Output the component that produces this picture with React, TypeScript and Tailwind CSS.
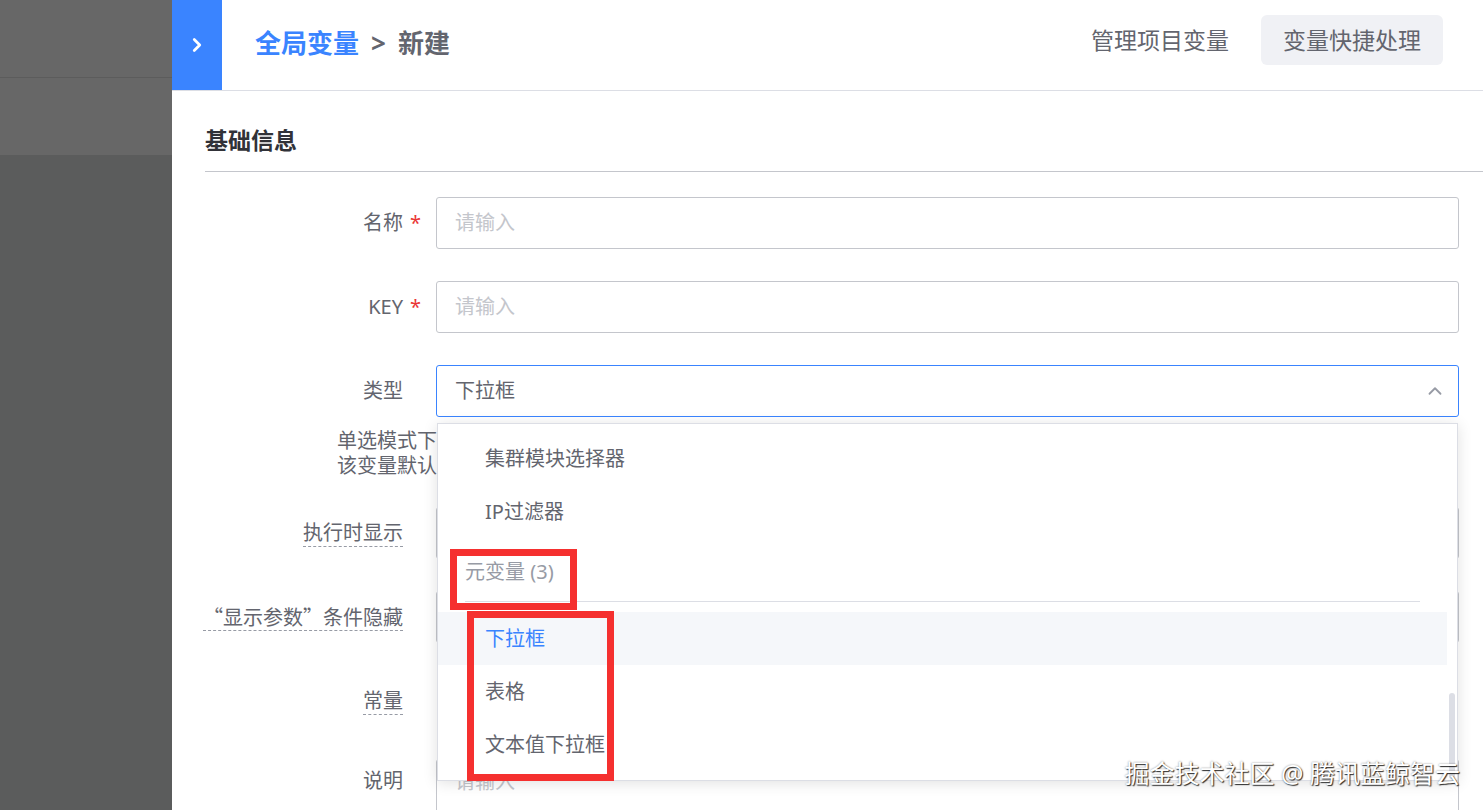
import { ChevronRight, ChevronUp } from "lucide-react";

const font = "font-['Noto_Sans','Noto_Sans_CJK_SC',sans-serif]";

function Label({ text, required, dashed, cjk }: { text: string; required?: boolean; dashed?: boolean; cjk?: boolean }) {
    const base = dashed
        ? "whitespace-nowrap border-b border-dashed border-[#979ba5] text-[20px] leading-[26px] text-[#63656e]"
        : "whitespace-nowrap text-[20px] leading-[26px] text-[#63656e]";
    return (
        <div className="flex w-[231px] shrink-0 items-center">
            <div className="flex w-[198px] justify-end">
                <span className={cjk ? `${base} font-['Noto_Sans_CJK_SC',sans-serif]` : base}>{text}</span>
            </div>
            {required && <span className="ml-[7px] text-[20px] text-[#ea3636]">*</span>}
        </div>
    );
}

function Input({ placeholder }: { placeholder?: string }) {
    return (
        <div className="flex h-[52px] flex-1 items-center rounded-[3px] border border-[#c4c6cc] px-[18px] text-[20px] text-[#c4c6cc]">
            {placeholder}
        </div>
    );
}

function Option({ text, active }: { text: string; active?: boolean }) {
    return (
        <div
            className={
                active
                    ? "flex h-[53px] items-center bg-[#f5f7fa] pl-[47px] text-[20px] text-[#3a84ff]"
                    : "flex h-[53px] items-center pl-[47px] text-[20px] text-[#63656e]"
            }
        >
            {text}
        </div>
    );
}

export default function App() {
    return (
        <div className={`flex h-[810px] w-full overflow-hidden ${font}`}>
            <aside className="flex w-[172px] shrink-0 flex-col">
                <div className="h-[78px] border-b border-[#5c5c5c] bg-[#676767]" />
                <div className="h-[77px] bg-[#676767]" />
                <div className="flex-1 bg-[#5b5c5c]" />
            </aside>

            <main className="relative flex flex-1 flex-col bg-white">
                <header className="flex h-[91px] items-center border-b border-[#dcdee5]">
                    <button className="flex h-[90px] w-[50px] items-center justify-center bg-[#3a84ff] text-white">
                        <ChevronRight size={22} strokeWidth={3} />
                    </button>
                    <div className="mb-[4px] ml-[33px] flex items-center text-[26px] font-bold">
                        <span className="text-[#3a84ff]">全局变量</span>
                        <span className="mx-[12px] text-[#63656e]">&gt;</span>
                        <span className="text-[#63656e]">新建</span>
                    </div>
                    <div className="mb-[10px] ml-auto flex items-center gap-[32px] pr-[40px]">
                        <span className="text-[23px] text-[#63656e]">管理项目变量</span>
                        <button className="h-[50px] rounded-[6px] bg-[#f0f1f5] px-[22px] text-[23px] text-[#63656e]">
                            变量快捷处理
                        </button>
                    </div>
                </header>

                <section className="pl-[33px]">
                    <div className="border-b border-[#c4c6cc] pt-[33px] pb-[15px] text-[23px] leading-[32px] font-bold text-[#313238]">
                        基础信息
                    </div>

                    <div className="flex flex-col pr-[24px] pt-[25px]">
                        <div className="flex h-[52px] items-center">
                            <Label text="名称" required />
                            <Input placeholder="请输入" />
                        </div>
                        <div className="mt-[32px] flex h-[52px] items-center">
                            <Label text="KEY" required />
                            <Input placeholder="请输入" />
                        </div>
                        <div className="relative mt-[32px] flex h-[52px] items-center">
                            <Label text="类型" />
                            <div className="flex h-[52px] flex-1 items-center justify-between rounded-[3px] border border-[#3a84ff] pl-[18px] pr-[12px] text-[20px] text-[#63656e]">
                                下拉框
                                <ChevronUp size={22} strokeWidth={2} className="text-[#979ba5]" />
                            </div>

                            <div className="absolute top-[58px] left-[232px] right-[1px] z-10 h-[358px] overflow-hidden border border-[#dcdee5] bg-white shadow-[0_2px_14px_rgba(0,0,0,0.12)]">
                                <div className="pt-[8px] pr-[10px]">
                                    <Option text="集群模块选择器" />
                                    <Option text="IP过滤器" />
                                    <div className="mx-[27px] flex h-[64px] items-end border-b border-[#dcdee5] pb-[14px] text-[20px] text-[#979ba5]">
                                        元变量 (3)
                                    </div>
                                    <div className="mt-[10px]">
                                        <Option text="下拉框" active />
                                        <Option text="表格" />
                                        <Option text="文本值下拉框" />
                                    </div>
                                </div>
                                <div className="absolute right-[2px] bottom-[1px] h-[86px] w-[6px] rounded-full bg-[#dcdee5]" />
                            </div>
                        </div>

                        <div className="ml-[132px] mt-[11px] w-[100px] overflow-hidden text-[20px] leading-[25px] text-[#63656e]">
                            <p className="whitespace-nowrap">单选模式下</p>
                            <p className="whitespace-nowrap">该变量默认</p>
                        </div>

                        <div className="mt-[29px] flex h-[52px] items-center">
                            <Label text="执行时显示" dashed />
                            <Input />
                        </div>
                        <div className="mt-[32px] flex h-[52px] items-center">
                            <Label text="“显示参数”条件隐藏" dashed cjk />
                            <Input />
                        </div>
                        <div className="mt-[32px] flex h-[52px] items-center">
                            <Label text="常量" dashed />
                            <div className="flex-1" />
                        </div>
                        <div className="mt-[32px] flex items-start">
                            <div className="pt-[9px]">
                                <Label text="说明" />
                            </div>
                            <div className="h-[120px] flex-1 rounded-[3px] border border-[#c4c6cc] px-[18px] pt-[9px] text-[20px] leading-[26px] text-[#c4c6cc]">
                                请输入
                            </div>
                        </div>
                    </div>
                </section>

                <div className="pointer-events-none absolute top-[549px] left-[278px] z-20 h-[61px] w-[127px] border-[7px] border-[#f5302f]" />
                <div className="pointer-events-none absolute top-[611px] left-[295px] z-20 h-[170px] w-[147px] border-[7px] border-[#f5302f]" />

                <div className="pointer-events-none absolute right-[23px] bottom-[22px] z-30 text-[25px] leading-[30px] text-white [text-shadow:1px_1px_1px_rgba(0,0,0,0.8),0_0_2px_rgba(0,0,0,0.45)]">
                    掘金技术社区 @ 腾讯蓝鲸智云
                </div>
            </main>
        </div>
    );
}
